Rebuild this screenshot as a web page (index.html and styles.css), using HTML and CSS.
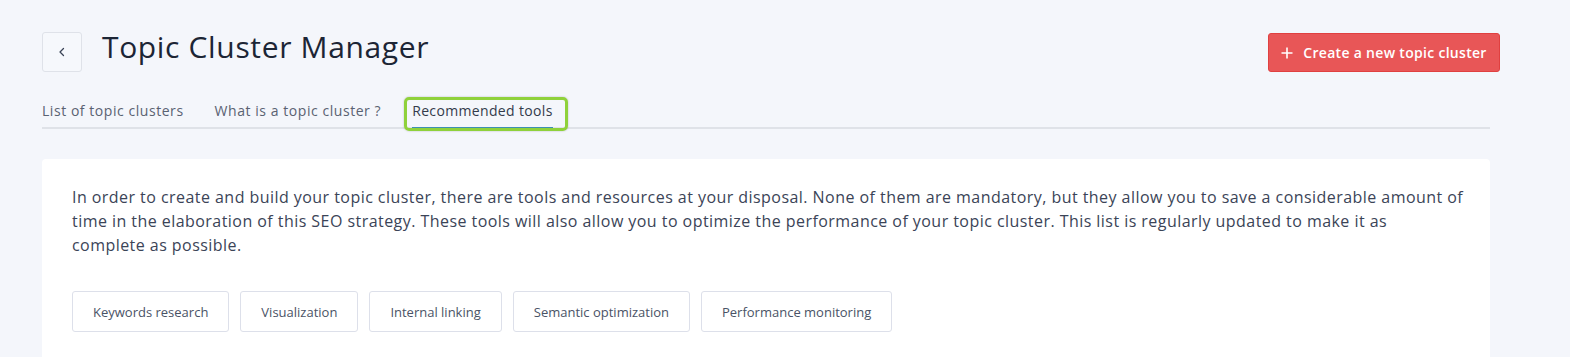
FILE: index.html
```html
<!DOCTYPE html>
<html>
<head>
<meta charset="utf-8">
<link rel="stylesheet" href="styles.css">
</head>
<body>
<div class="page">
  <header class="header">
    <div class="title-group">
      <button class="back-btn" aria-label="Back">
        <svg width="10" height="10" viewBox="0 0 10 10"><path d="M6.5 1.5 L3 5 L6.5 8.5" fill="none" stroke="#3a4356" stroke-width="1.3" stroke-linecap="round" stroke-linejoin="round"/></svg>
      </button>
      <h1 class="title">Topic Cluster Manager</h1>
    </div>
    <button class="create-btn">
      <svg width="12" height="12" viewBox="0 0 12 12"><path d="M6 0.5 V11.5 M0.5 6 H11.5" stroke="#fff" stroke-width="1.6"/></svg>
      <span>Create a new topic cluster</span>
    </button>
  </header>
  <nav class="tabs">
    <a class="tab">List of topic clusters</a>
    <a class="tab">What is a topic cluster ?</a>
    <a class="tab active">Recommended tools</a>
  </nav>
  <section class="card">
    <p class="intro">In order to create and build your topic cluster, there are tools and resources at your disposal. None of them are mandatory, but they allow you to save a considerable amount of time in the elaboration of this SEO strategy. These tools will also allow you to optimize the performance of your topic cluster. This list is regularly updated to make it as<br>complete as possible.</p>
    <div class="chips">
      <button class="chip">Keywords research</button>
      <button class="chip">Visualization</button>
      <button class="chip">Internal linking</button>
      <button class="chip">Semantic optimization</button>
      <button class="chip">Performance monitoring</button>
    </div>
  </section>
</div>
</body>
</html>
```

FILE: styles.css
```css
* { box-sizing: border-box; }
html, body { margin: 0; padding: 0; }
body {
  background: #f4f6fb;
  font-family: "Open Sans", "Noto Sans", sans-serif;
  color: #2f3747;
  overflow: hidden;
}
.page {
  padding: 32px 80px 0 42px;
  width: 1570px;
}
.header {
  display: flex;
  justify-content: space-between;
  align-items: flex-start;
}
.title-group {
  display: flex;
  align-items: flex-start;
  gap: 20px;
}
.back-btn {
  width: 40px;
  height: 40px;
  border: 1px solid #dfe2e9;
  border-radius: 3px;
  background: #f6f8fc;
  display: flex;
  align-items: center;
  justify-content: center;
  padding: 0;
}
.title {
  margin: -5px 0 0 0;
  font-size: 30px;
  font-weight: 500;
  color: #1c2535;
  letter-spacing: 0.65px;
  line-height: 40px;
}
.create-btn {
  margin-top: 1px;
  margin-right: -10px;
  width: 232px;
  height: 39px;
  background: #e85657;
  border: 1px solid #e04040;
  border-radius: 3px;
  color: #fff;
  font-family: inherit;
  font-size: 14px;
  font-weight: 600;
  letter-spacing: 0.3px;
  display: flex;
  align-items: center;
  justify-content: center;
  gap: 10px;
  padding: 0;
}
.tabs {
  margin-top: 28px;
  display: flex;
  gap: 31px;
  border-bottom: 2px solid #dfe2e8;
  height: 29px;
}
.tab {
  font-size: 14px;
  color: #5a6272;
  letter-spacing: 0.55px;
  line-height: 22px;
  position: relative;
}
.tab.active {
  color: #333b4b;
  letter-spacing: 0.35px;
  border-bottom: 2px solid #3e8fb3;
  height: 29px;
  margin-bottom: -2px;
}
.tab.active::after {
  content: "";
  position: absolute;
  left: -8px;
  right: -15px;
  top: -3px;
  bottom: -4px;
  border: 3px solid #8fd13b;
  border-radius: 5px;
  box-shadow: 0 0 2px rgba(0, 0, 0, 0.25);
}
.card {
  margin-top: 30px;
  background: #fff;
  border-radius: 4px;
  padding: 26px 22px 30px 30px;
  height: 240px;
}
.intro {
  margin: 0;
  font-size: 16px;
  letter-spacing: 0.45px;
  line-height: 24px;
  color: #3b4457;
}
.chips {
  margin-top: 34px;
  display: flex;
  gap: 11px;
}
.chip {
  height: 41px;
  padding: 0 20px;
  border: 1px solid #dde0ea;
  border-radius: 3px;
  background: #fff;
  font-family: inherit;
  font-size: 13px;
  color: #4a5366;
}
```
